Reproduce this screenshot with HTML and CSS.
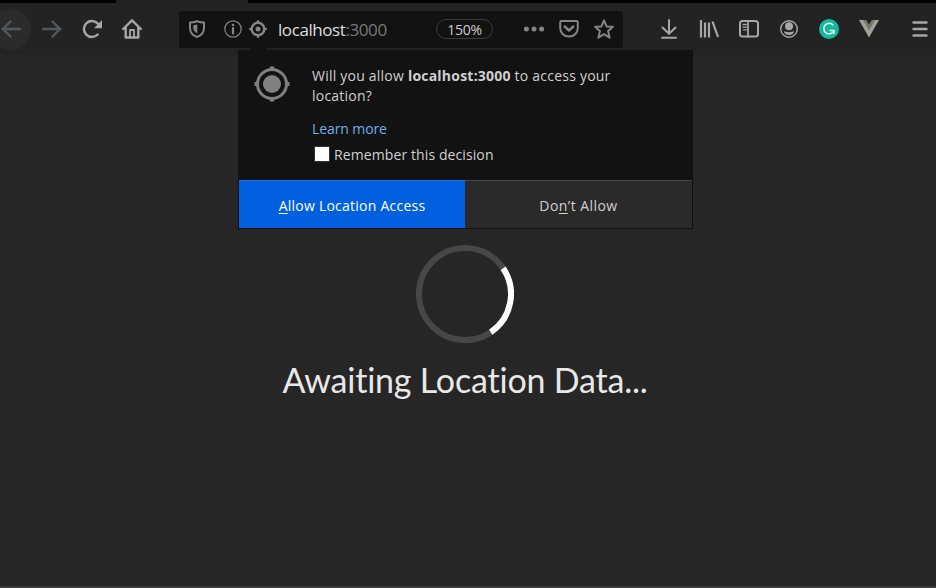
FILE: index.html
```
<!DOCTYPE html>
<html lang="en">
<head>
<meta charset="utf-8">
<title>Awaiting Location Data</title>
<link rel="stylesheet" href="styles.css">
</head>
<body>
<div class="tabstrip"><div class="active-tab"></div></div>
<header class="toolbar">
  <button class="tool back" aria-label="Back"><svg viewBox="0 0 20 20" width="20" height="20" class="line heavy"><path d="M19 10H1.500M9.500 2.500L2 10l7.500 7.500"/></svg></button>
  <button class="tool dim" aria-label="Forward"><svg viewBox="0 0 20 20" width="20" height="20" class="line heavy"><path d="M1 10h17.500M10.500 2.500L18 10l-7.500 7.500"/></svg></button>
  <button class="tool" aria-label="Reload"><svg viewBox="0 0 20 20" width="20" height="20" class="line heavy"><path d="M15.700 15.500A8 8 0 1 1 16 4.800L17.500 7"/><path class="fill" d="M20 1v8.200h-8z"/></svg></button>
  <button class="tool" aria-label="Home"><svg viewBox="0 0 20 20" width="20" height="20" class="line heavy"><path d="M1.200 10L10 1.300 18.800 10M3.700 9v9.500h12.600V9"/><path d="M8 18v-7h4v7" stroke-width="1.800"/></svg></button>
  <div class="urlbar">
    <svg class="shield line" viewBox="0 0 18 18" width="18" height="18"><path d="M9 1.200C6.500 2.200 4 2.600 2 2.600V8c0 4.500 2.500 7.500 7 9 4.500-1.500 7-4.500 7-9V2.600c-2 0-4.500-.4-7-1.400z"/><path class="fill" d="M9.300 4.500v9C6.500 12 5.300 10 5.300 8V5.300z"/></svg>
    <svg class="info line" viewBox="0 0 18 18" width="18" height="18"><circle cx="9" cy="9" r="8.200" stroke-width="1.200"/><path d="M9 8v5.500" stroke-width="2.200"/><circle class="fill" cx="9" cy="5" r="1.300"/></svg>
    <svg class="geo line heavy" viewBox="0 0 18 18" width="18" height="18"><circle cx="9" cy="9" r="6.300"/><circle class="fill" cx="9" cy="9" r="2.500"/><path d="M9 1.200v1.500M9 15.300v1.500M1.200 9h1.500M15.300 9h1.500"/></svg>
    <span class="url">localhost<span class="port">:3000</span></span>
    <span class="zoom-level">150%</span>
    <svg class="more" viewBox="0 0 20 20" width="20" height="20"><circle cx="2.400" cy="10" r="2.500"/><circle cx="10" cy="10" r="2.500"/><circle cx="17.600" cy="10" r="2.500"/></svg>
    <svg class="pocket line heavy" viewBox="0 0 20 20" width="20" height="20"><path d="M2.500 2h15q1.300 0 1.300 1.300V9c0 5-4 8.600-8.800 8.600S1.200 14 1.200 9V3.300Q1.200 2 2.500 2z" stroke-width="2"/><path d="M5.700 7.500l4.300 4 4.300-4"/></svg>
    <svg class="star line" viewBox="0 0 20 20" width="20" height="20"><path d="M10 1.400l2.600 6 6.300.4-4.800 4.300 1.500 6.600-5.600-3.500-5.600 3.500 1.500-6.600L1.100 7.800l6.300-.4z"/></svg>
  </div>
  <nav class="actions">
    <button class="tool" aria-label="Downloads"><svg viewBox="0 0 20 20" width="20" height="20" class="line"><path d="M10 1v13M3.500 8.500L10 14.700l6.500-6.200M3 18.700h14"/></svg></button>
    <button class="tool" aria-label="Library"><svg viewBox="0 0 20 20" width="20" height="20" class="line flat"><path d="M2 1v17.500M6 3.500v15M10 3.500v15"/><path d="M13.500 2.500l5.500 15.500"/></svg></button>
    <button class="tool" aria-label="Sidebar"><svg viewBox="0 0 20 20" width="20" height="20" class="line"><rect x="1" y="2" width="18" height="15.500" rx="2.500"/><path d="M9 2v15.500" stroke-width="1.800"/><path d="M4 5.500h3.300M4 8.200h3.300M4.500 10.900h2.800" stroke-width="1.300"/></svg></button>
    <button class="tool" aria-label="Account"><svg viewBox="0 0 20 20" width="20" height="20" class="line"><circle cx="10" cy="10" r="8.300" stroke-width="1.400"/><circle class="fill" cx="10" cy="7.300" r="4"/><path class="fill" d="M5 12.200c1.400 0 2.200 1 5 1s3.600-1 5-1c0 2.400-2.200 3.800-5 3.800s-5-1.400-5-3.800z"/></svg></button>
    <button class="tool" aria-label="Grammarly"><svg viewBox="0 0 20 20" width="20" height="20"><circle cx="10" cy="10" r="10" fill="#15b99f"/><path d="M14.200 6.200A5.300 5.300 0 1 0 15 11.500M10.500 11.500H15v3.500" fill="none" stroke="#e8fffb" stroke-width="1.500"/></svg></button>
    <button class="tool" aria-label="Vue"><svg viewBox="0 0 20 20" width="20" height="20"><path d="M0 1h20L10 18.500z" fill="#a3a096"/><path d="M4 1h12l-6 10.500z" fill="#74756f"/><path d="M7.200 1h5.600L10 5.500z" fill="#242424"/></svg></button>
    <button class="tool menu" aria-label="Menu"><svg viewBox="0 0 20 20" width="20" height="20" class="line heavy"><path d="M3.500 3.500h13M3.500 10h13M3.500 16.500h13"/></svg></button>
  </nav>
</header>

<section class="popup" role="dialog">
  <div class="notch"></div>
  <div class="popup-body">
    <svg class="target" viewBox="0 0 36 36" width="36" height="36"><circle cx="18" cy="18" r="9"/><circle cx="18" cy="18" r="14.500" fill="none" stroke="currentColor" stroke-width="3"/><path d="M16 .5h4v4h-4zM16 31.500h4v4h-4zM.5 16h4v4h-4zM31.500 16h4v4h-4z"/></svg>
    <div class="popup-text">
      <p class="question">Will you allow <b>localhost:3000</b> to access your<br>location?</p>
      <a class="learn">Learn more</a>
      <label class="remember"><span class="box"></span><span>Remember this decision</span></label>
    </div>
  </div>
  <div class="popup-buttons">
    <button class="choice allow"><u>A</u>llow Location Access</button>
    <button class="choice deny">Do<u>n</u>’t Allow</button>
  </div>
</section>

<main class="page">
  <svg class="spinner" viewBox="0 0 98 98" width="98" height="98"><circle cx="49" cy="49" r="46" stroke="#474747"/><path d="M87.140 23.280A46 46 0 0 1 74.720 87.140" stroke="#fff"/></svg>
  <h1>Awaiting Location Data...</h1>
</main>
</body>
</html>
```
FILE: styles.css
```
* { box-sizing: border-box; }

body {
  margin: 0;
  height: 588px;
  overflow: hidden;
  display: flex;
  flex-direction: column;
  background: #262626;
  color: #d0d0d0;
  font-family: "Open Sans", "Noto Sans", sans-serif;
  font-size: 14px;
}

button {
  border: 0;
  padding: 0;
  background: none;
  color: inherit;
  font: inherit;
}

svg { display: block; flex: none; fill: currentColor; }
.line { fill: none; stroke: currentColor; stroke-width: 2; stroke-linecap: round; stroke-linejoin: round; }
.heavy { stroke-width: 2.4; }
.flat { stroke-linecap: butt; stroke-width: 2.2; }
.fill { fill: currentColor; stroke: none; }

.tabstrip { height: 3px; background: #000; flex: none; }
.active-tab { width: 132px; height: 3px; margin-left: 116px; background: #232323; }

.toolbar {
  height: 52px;
  flex: none;
  display: flex;
  align-items: center;
  background: #232323;
  color: #a7a7a7;
}
.tool {
  width: 40px;
  height: 40px;
  flex: none;
  display: flex;
  align-items: center;
  justify-content: center;
}
.dim, .back { color: #53585b; }
.back {
  width: 41px;
  height: 41px;
  margin-left: -10px;
  margin-right: 1px;
  border-radius: 50%;
  background: #2b2b2b;
}

.urlbar {
  width: 444px;
  height: 37px;
  flex: none;
  margin-left: 27px;
  padding-left: 9px;
  display: flex;
  align-items: center;
  border-radius: 3px;
  background: #121212;
  color: #858585;
}
.info { margin-left: 18px; }
.geo { margin-left: 7px; }
.url {
  width: 158px;
  margin-left: 11px;
  padding-top: 2px;
  color: #dedede;
  font-size: 17px;
  letter-spacing: -0.42px;
  line-height: 24px;
}
.port { color: #797979; }
.zoom-level {
  width: 57px;
  height: 20px;
  flex: none;
  border: 1px solid #3c3c3c;
  border-radius: 10px;
  color: #cacaca;
  font-size: 14px;
  letter-spacing: -0.3px;
  line-height: 20px;
  text-align: center;
}
.more { margin-left: 31px; }
.pocket { margin-left: 15px; }
.star { margin-left: 15px; }

.actions { display: flex; margin-left: 26px; }
.menu { width: 36px; margin-left: 13px; }

.popup {
  position: absolute;
  left: 238px;
  top: 50px;
  width: 455px;
  height: 179px;
  display: flex;
  flex-direction: column;
  border: 1px solid #111;
  background: #121212;
}
.notch {
  position: absolute;
  left: 9px;
  top: -4px;
  width: 21px;
  height: 4px;
  background: #121212;
  clip-path: polygon(4px 0, 17px 0, 21px 4px, 0 4px);
}
.popup-body {
  height: 129px;
  flex: none;
  display: flex;
  gap: 22px;
  padding: 15px 0 0 15px;
}
.target { color: #808080; }
.popup-text { display: flex; flex-direction: column; align-items: flex-start; white-space: nowrap; }
.question { margin: 0; line-height: 20px; letter-spacing: 0.22px; }
.learn { margin-top: 13px; line-height: 20px; letter-spacing: -0.1px; color: #6cb0ec; }
.remember { display: flex; align-items: flex-start; margin: 6px 0 0 2px; line-height: 20px; letter-spacing: 0.1px; }
.box { width: 16px; height: 16px; margin: 1px 4px 0 0; border: 1px solid #333; background: #fff; }

.popup-buttons { display: flex; height: 48px; }
.choice { border-top: 1px solid #474747; padding-top: 1px; background: #2a2a2a; letter-spacing: 0.24px; }
.allow { width: 226px; border-color: #1b73e6; background: #0060df; color: #fff; }
.deny { width: 227px; letter-spacing: 0.45px; }
u { text-underline-offset: 2px; text-decoration-thickness: 1px; }

.page {
  flex: 1;
  padding: 190px 6px 0 0;
  display: flex;
  flex-direction: column;
  align-items: center;
  border-bottom: 2px solid #3c383e;
}
.spinner { fill: none; stroke-width: 6; }
h1 {
  margin: 15px 0 0;
  color: #e8e8e6;
  font: 400 34px/44px Lato, sans-serif;
  font-variant-ligatures: none;
  letter-spacing: -0.2px;
  white-space: nowrap;
}
```
